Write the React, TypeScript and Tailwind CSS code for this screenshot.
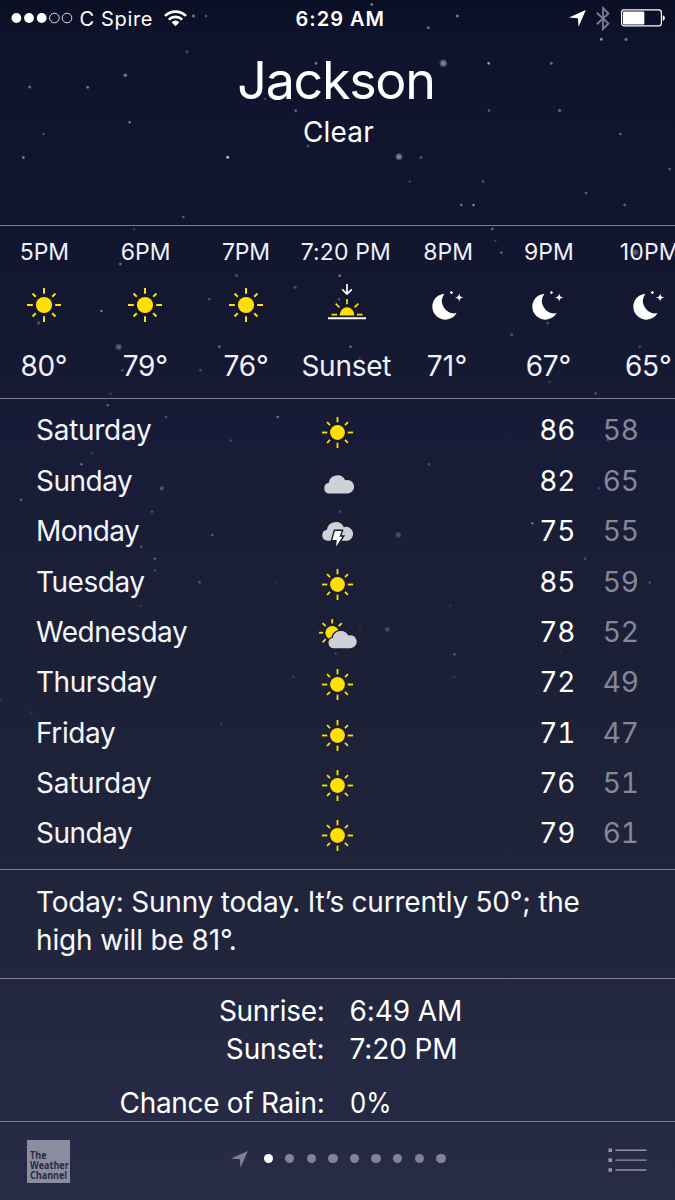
import type { ReactNode } from "react";

const YELLOW = "#ffe000";

/* x, y, radius, opacity */
const STARS: [number, number, number, number][] = [
  [193.5, 16, 1.5, 0.6], [206, 16, 1.3, 0.4], [187, 51.7, 1.4, 0.35], [125.3, 75.3, 1.7, 0.6],
  [29.7, 87, 1.5, 0.5], [87.7, 87.3, 1.4, 0.6], [129.7, 122.3, 1.3, 0.6], [43.5, 134, 1.3, 0.35],
  [23.3, 157.5, 1.4, 0.6], [227.7, 157.3, 1.5, 0.95], [183.3, 217, 1.3, 0.45], [316, 63.3, 1.4, 0.6],
  [295.7, 110.7, 1.4, 0.5], [265, 99, 1.2, 0.3], [308, 146, 1.4, 0.35], [371.7, 4.5, 1.4, 0.6],
  [457.3, 16, 1.4, 0.65], [428.3, 27.7, 1.5, 0.5], [601.3, 39.3, 1.4, 0.8], [626, 39.5, 1.6, 0.55],
  [443.3, 63.3, 3.2, 0.6], [488.7, 63.3, 1.4, 0.75], [551.3, 63.3, 1.5, 0.5], [489, 110.5, 1.4, 0.4],
  [559.7, 110.5, 1.5, 0.5], [620.3, 134, 1.3, 0.5], [399, 156.7, 3, 0.6], [421, 157.5, 1.4, 0.4],
  [669.7, 169, 1.4, 0.4], [409.7, 181.5, 1.3, 0.25], [483, 181.5, 1.3, 0.4], [586, 193, 1.4, 0.4],
  [461.3, 205, 1.2, 0.6], [473.5, 205, 1.2, 0.75], [624.7, 205, 1.4, 0.45],
  [134, 229, 1.4, 0.2], [120.3, 264, 1.5, 0.45], [236.7, 275.5, 1.4, 0.35], [295, 287.3, 1.6, 0.3],
  [209.3, 299.3, 1.3, 0.35], [101.5, 311, 1.2, 0.6], [38.7, 323, 1.6, 0.35], [118.7, 347, 2.8, 0.4],
  [219.3, 346.7, 1.4, 0.45], [122.3, 370.3, 1.4, 0.3], [200.5, 370.3, 1.4, 0.3], [110.3, 393.7, 1.3, 0.2],
  [107.7, 405.3, 1.3, 0.45], [492.3, 229, 1.4, 0.45], [495.3, 240.7, 1.3, 0.25], [501.3, 252.5, 1.4, 0.4],
  [635.5, 252.3, 2.8, 0.4], [339.7, 275.7, 1.3, 0.6], [339, 299.3, 1.4, 0.35], [547.7, 323, 1.4, 0.35],
  [511.7, 334.7, 1.5, 0.35], [350.5, 346.7, 1.3, 0.5], [639.7, 346.7, 1.5, 0.25], [359.7, 358.5, 1.4, 0.2],
  [549.7, 382, 1.4, 0.2], [595.7, 393.5, 1.3, 0.35], [166, 417, 1.4, 0.3], [277.7, 417, 1.3, 0.55],
  [230.7, 440.7, 1.4, 0.25], [91.7, 452.7, 1.3, 0.2], [81.5, 464.3, 1.2, 0.55], [161.7, 488.3, 2, 0.35],
  [21, 499.7, 1.3, 0.45], [152, 511.7, 1.4, 0.3], [212.3, 535, 1.3, 0.35], [141.3, 546.7, 1.3, 0.3],
  [154.7, 558.7, 1.3, 0.4], [155, 570.5, 1.2, 0.25], [199.7, 582.3, 1.5, 0.3], [276, 582.3, 1.3, 0.15],
  [140.7, 606, 1.3, 0.15], [293.3, 676.7, 1.4, 0.2], [1, 700.5, 1.4, 0.15], [31.7, 712.3, 1.4, 0.12],
  [221.3, 724, 1.4, 0.12], [429, 464.3, 1.4, 0.3], [398.3, 535, 2.5, 0.3], [532.3, 523.3, 1.2, 0.6],
  [607.7, 440, 1.4, 0.3], [599, 488.3, 1.3, 0.25], [585, 558.7, 1.3, 0.3], [649.7, 582.5, 1.4, 0.25],
  [450, 606, 1.3, 0.15], [387.3, 629.5, 2.3, 0.25], [454.5, 654.3, 1.3, 0.35], [454, 677, 1.4, 0.12],
  [340, 511.5, 1.4, 0.25], [335.7, 653.5, 1.2, 0.25], [360, 629.5, 1.2, 0.15], [560.7, 653, 1.2, 0.1],
];

function NightSky() {
  return (
    <svg className="pointer-events-none absolute inset-0" width="675" height="1200" viewBox="0 0 675 1200" aria-hidden="true">
      <defs>
        <radialGradient id="star">
          <stop offset="0" stopColor="#dfe2ff" />
          <stop offset="0.45" stopColor="#dfe2ff" stopOpacity="0.75" />
          <stop offset="1" stopColor="#dfe2ff" stopOpacity="0" />
        </radialGradient>
      </defs>
      {STARS.map(([x, y, r, o], i) => (
        <circle key={i} cx={x} cy={y} r={r * 1.4} fill="url(#star)" opacity={o} />
      ))}
    </svg>
  );
}

function SunRays({ cx, cy, inner, outer, angles, width = 2 }: { cx: number; cy: number; inner: number; outer: number; angles: number[]; width?: number }) {
  return (
    <g stroke={YELLOW} strokeWidth={width}>
      {angles.map((a) => {
        const c = Math.cos((a * Math.PI) / 180);
        const s = Math.sin((a * Math.PI) / 180);
        return <line key={a} x1={cx + c * inner} y1={cy - s * inner} x2={cx + c * outer} y2={cy - s * outer} />;
      })}
    </g>
  );
}

const ALL_ROUND = [0, 45, 90, 135, 180, 225, 270, 315];

function Sun({ size }: { size: number }) {
  return (
    <svg width={size} height={size} viewBox="-17 -17 34 34">
      <circle r="8.1" fill={YELLOW} />
      <SunRays cx={0} cy={0} inner={11.2} outer={17} angles={[0, 90, 180, 270]} />
      <SunRays cx={0} cy={0} inner={11.6} outer={16.2} angles={[45, 135, 225, 315]} />
    </svg>
  );
}

function SunsetIcon() {
  return (
    <svg className="mb-[6px]" width="40" height="38" viewBox="0 0 40 38" fill="none">
      <path d="M20 1v10M15.2 6.3l4.8 4.8 4.8-4.8" stroke="#fff" strokeWidth="1.7" />
      <path d="M12.6 32.6a7.4 8.3 0 0 1 14.8 0z" fill={YELLOW} />
      <SunRays cx={20} cy={32} inner={10.8} outer={16} angles={[45, 90, 135]} width={1.7} />
      <path d="M4.4 31.6h5.7M29.9 31.6h5.7" stroke={YELLOW} strokeWidth="1.7" />
      <path d="M1 35.3h38" stroke="#fff" strokeWidth="2" />
    </svg>
  );
}

function Moon() {
  return (
    <svg width="34" height="34" viewBox="0 0 34 34" fill="#fff">
      <path d="M13.4 5.7A13 13 0 1 0 25.6 25.1A12.3 12.3 0 0 1 13.4 5.7z" />
      <path d="M28.2 5.3c.5 2.8 1.2 3.7 4.3 4.3c-3.1.6-3.8 1.5-4.3 4.3c-.5-2.8-1.2-3.7-4.3-4.3c3.1-.6 3.8-1.5 4.3-4.3z" />
      <path d="M20.4 2.9l1.7 1.7l-1.7 1.7l-1.7-1.7z" />
    </svg>
  );
}

const CLOUD = "M5.6 20.8a5.6 5.6 0 0 1-.7-11.1A9 9 0 0 1 21.9 7.2A7 7 0 1 1 23.2 20.8z";

function Cloud() {
  return (
    <svg className="ml-[2px]" width="30" height="21" viewBox="0 0 31 21">
      <path d={CLOUD} fill="#d0d1d6" />
    </svg>
  );
}

function Storm() {
  return (
    <svg className="mt-[3px]" width="31" height="30" viewBox="0 0 31 30">
      <path d={CLOUD} fill="#d0d1d6" />
      <path d="M12.4 10.2h8.2l-2.2 5.8h3.4L13 29.4l1-8.6H9.4z" fill="#fff" stroke="#1a1e36" strokeWidth="1.4" />
    </svg>
  );
}

function PartlyCloudy() {
  return (
    <svg width="38" height="32" viewBox="0 0 38 32">
      <circle cx="13.2" cy="14.7" r="6.8" fill={YELLOW} />
      <SunRays cx={13.2} cy={14.7} inner={9.2} outer={13.6} angles={ALL_ROUND} width={1.8} />
      <g transform="translate(9.2 11) scale(.92)">
        <path d={CLOUD} fill="#d0d1d6" stroke="#1a1e36" strokeWidth="2.8" paintOrder="stroke" />
      </g>
    </svg>
  );
}

function LocationArrow({ className }: { className: string }) {
  return (
    <svg className={className} width="17" height="17" viewBox="0 0 17 17" fill="currentColor">
      <path d="M16.8 0L9.6 16.8L8.9 8.2L0 7.5z" />
    </svg>
  );
}

function StatusBar() {
  return (
    <header className="flex h-9 items-center pl-[11px] text-[20px] leading-[36px]">
      <svg width="62" height="12" viewBox="0 0 62 12" fill="#fff">
        <circle cx="5.4" cy="6" r="4.9" />
        <circle cx="18" cy="6" r="4.9" />
        <circle cx="30.7" cy="6" r="4.9" />
        <g fill="none" stroke="#fff" strokeWidth="1" opacity=".85">
          <circle cx="43.4" cy="6" r="4.8" />
          <circle cx="56" cy="6" r="4.8" />
        </g>
      </svg>
      <span className="ml-[6.5px] w-[84px] pt-px tracking-[0.65px]">C Spire</span>
      <svg width="23" height="17" viewBox="0 0 23 17" fill="none" stroke="#fff" strokeWidth="2.7">
        <path d="M1 5.9a15 15 0 0 1 21 0" />
        <path d="M4.8 9.6a9.6 9.6 0 0 1 13.4 0" />
        <path d="M11.5 16.2L7.6 12.2a5.6 5.6 0 0 1 7.8 0z" fill="#fff" stroke="none" />
      </svg>
      <span className="ml-[109px] w-[100px] pt-px font-semibold tracking-[1px]">6:29 AM</span>
      <LocationArrow className="mt-px ml-[173.5px] text-white" />
      <svg className="ml-[10px]" width="14" height="25" viewBox="0 0 14 25" fill="none" stroke="#767991" strokeWidth="1.9">
        <path d="M.8 6.7l11.6 10.8L7 23V2l5.4 5.5L.8 18.2" />
      </svg>
      <svg className="ml-[11px]" width="45" height="18" viewBox="0 0 45 18">
        <rect x=".6" y=".9" width="39.8" height="16" rx="2.6" fill="none" stroke="#fff" strokeWidth="1.2" />
        <rect x="2" y="2.4" width="21.3" height="13" rx="1" fill="#fff" />
        <path d="M41.8 6.2c2.7.6 2.7 5 0 5.6z" fill="#fff" />
      </svg>
    </header>
  );
}

type Hour = { label: string; value: string; icon: ReactNode; labelClass: string; valueClass: string };

const HOURS: Hour[] = [
  { label: "5PM", value: "80°", icon: <Sun size={34} />, labelClass: "tracking-[0px]", valueClass: "tracking-[-0.3px] mr-[1px]" },
  { label: "6PM", value: "79°", icon: <Sun size={34} />, labelClass: "tracking-[0px] ml-[1px]", valueClass: "tracking-[-0.25px]" },
  { label: "7PM", value: "76°", icon: <Sun size={34} />, labelClass: "tracking-[-0.2px]", valueClass: "tracking-[-0.2px]" },
  { label: "7:20 PM", value: "Sunset", icon: <SunsetIcon />, labelClass: "tracking-[0.1px] mr-[2px]", valueClass: "tracking-[-0.25px] mr-[1px]" },
  { label: "8PM", value: "71°", icon: <Moon />, labelClass: "tracking-[0px] ml-[1px]", valueClass: "tracking-[0.3px] mr-[1px]" },
  { label: "9PM", value: "67°", icon: <Moon />, labelClass: "tracking-[0px] ml-[1px]", valueClass: "tracking-[-0.15px]" },
  { label: "10PM", value: "65°", icon: <Moon />, labelClass: "tracking-[0.1px] ml-[1px]", valueClass: "tracking-[-0.2px] mr-[2px]" },
];

function HourlyForecast() {
  return (
    <section className="flex h-[174px] overflow-hidden border-y border-[#7b7e92]">
      <div className="-ml-[6px] flex shrink-0">
        {HOURS.map((h) => (
          <div key={h.label} className="flex w-[100.8px] shrink-0 flex-col items-center whitespace-nowrap text-[#eef0fb]">
            <span className={`text-[23px] leading-[52px] ${h.labelClass}`}>{h.label}</span>
            <span className="flex h-[54px] items-center justify-center">{h.icon}</span>
            <span className={`mt-[20px] text-[28px] leading-[28px] ${h.valueClass}`}>{h.value}</span>
          </div>
        ))}
      </div>
    </section>
  );
}

type Day = { name: string; icon: ReactNode; high: number; low: number; nameClass: string };

const DAYS: Day[] = [
  { name: "Saturday", icon: <Sun size={31} />, high: 86, low: 58, nameClass: "tracking-[-0.28px]" },
  { name: "Sunday", icon: <Cloud />, high: 82, low: 65, nameClass: "tracking-[-0.48px]" },
  { name: "Monday", icon: <Storm />, high: 75, low: 55, nameClass: "tracking-[-0.6px]" },
  { name: "Tuesday", icon: <Sun size={31} />, high: 85, low: 59, nameClass: "tracking-[-0.48px]" },
  { name: "Wednesday", icon: <PartlyCloudy />, high: 78, low: 52, nameClass: "tracking-[-0.48px]" },
  { name: "Thursday", icon: <Sun size={31} />, high: 72, low: 49, nameClass: "tracking-[-0.48px]" },
  { name: "Friday", icon: <Sun size={31} />, high: 71, low: 47, nameClass: "tracking-[-0.39px]" },
  { name: "Saturday", icon: <Sun size={31} />, high: 76, low: 51, nameClass: "tracking-[-0.28px]" },
  { name: "Sunday", icon: <Sun size={31} />, high: 79, low: 61, nameClass: "tracking-[-0.48px]" },
];

function DailyForecast() {
  return (
    <section className="h-[471px] border-b border-[#7b7e92] pt-[6.3px] text-[28px]">
      {DAYS.map((d, i) => (
        <div key={i} className="flex h-[50.36px] items-center leading-[50px]">
          <span className={`w-[282px] pl-[36px] text-[#f4f5fc] ${d.nameClass}`}>{d.name}</span>
          <span className="flex w-[111px] items-center justify-center pt-[5px]">{d.icon}</span>
          <span className="w-[182px] text-right tracking-[-0.3px] tabular-nums">{d.high}</span>
          <span className="w-[63.5px] text-right tracking-[-0.3px] text-[#85879a] tabular-nums">{d.low}</span>
        </div>
      ))}
    </section>
  );
}

function Details() {
  return (
    <section className="h-[143px] border-b border-[#7b7e92] pt-[13px] text-[28px] leading-[38px]">
      <div className="flex">
        <span className="w-[324.5px] text-right tracking-[-0.3px]">Sunrise:</span>
        <span className="ml-[25px] tracking-[-0.1px]">6:49 AM</span>
      </div>
      <div className="flex">
        <span className="w-[324.5px] text-right tracking-[-0.1px]">Sunset:</span>
        <span className="ml-[25px] tracking-[-0.1px]">7:20 PM</span>
      </div>
      <div className="mt-4 flex">
        <span className="w-[324.5px] text-right tracking-[-0.3px]">Chance of Rain:</span>
        <span className="ml-[25px] origin-left scale-x-[0.92]">0%</span>
      </div>
    </section>
  );
}

function Footer() {
  return (
    <footer className="flex h-[78px] items-center pl-[27px]">
      <div className="mt-[1px] flex h-[43px] w-[43px] flex-col justify-end bg-[#8b8d9e] pb-[3px] pl-[3px] font-['Open_Sans'] text-[10.5px] leading-[10px] font-bold text-[#262a44]">
        <div className="origin-left scale-x-[0.86]">
          <div>The</div>
          <div>Weather</div>
          <div>Channel</div>
        </div>
      </div>
      <LocationArrow className="mb-[4px] ml-[161px] text-[#7e8192]" />
      <div className="mb-[5px] ml-[15.5px] flex gap-[12.2px]">
        {Array.from({ length: 9 }, (_, i) => (
          <span key={i} className={`size-[9.4px] rounded-full ${i === 0 ? "bg-white" : "bg-[#808394]"}`} />
        ))}
      </div>
      <svg className="mb-[3px] ml-[162.5px]" width="39" height="24" viewBox="0 0 39 24" fill="#9294a8">
        <path d="M.4 .4h3.6v3.6H.4zM.4 10.3h3.6v3.6H.4zM.4 20.2h3.6v3.6H.4z" />
        <path d="M7.5 1.5h31v1.4h-31zM7.5 11.4h31v1.4h-31zM7.5 21.3h31v1.4h-31z" />
      </svg>
    </footer>
  );
}

export default function App() {
  return (
    <main className="relative h-[1200px] w-[675px] overflow-hidden bg-linear-[180deg,#0b0f25_0px,#0f132c_50px,#11152f_220px,#151931_380px,#171b37_420px,#1a1e36_560px,#1e2238_760px,#22263d_960px,#252943_1090px,#272b45_1200px] font-['Inter',sans-serif] text-white">
      <NightSky />
      <div className="relative">
        <StatusBar />
        <div className="h-[189px] pt-[14px] text-center">
          <h1 className="mr-[3px] text-[52px] leading-[62px] tracking-[-1.3px]">Jackson</h1>
          <p className="mt-[2px] ml-[2px] text-[28px] leading-[36px] tracking-[0.2px]">Clear</p>
        </div>
        <HourlyForecast />
        <DailyForecast />
        <section className="h-[109px] border-b border-[#7b7e92] pt-[14px] pl-[36px] text-[28px] leading-[37.7px] text-[#f8f9ff]">
          <p className="tracking-[-0.22px]">Today: Sunny today. It’s currently 50°; the</p>
          <p className="tracking-[-0.15px]">high will be 81°.</p>
        </section>
        <Details />
        <Footer />
      </div>
    </main>
  );
}
